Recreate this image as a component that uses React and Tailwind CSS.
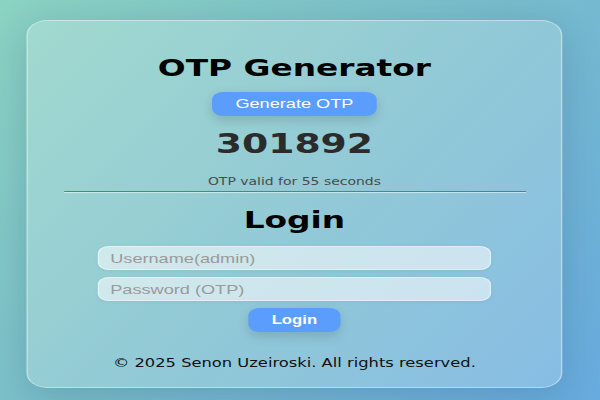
export default function App() {
  return (
    <div className="w-[600px] h-[400px] overflow-hidden bg-[linear-gradient(135deg,#8bd3c2_0%,#78bdcc_50%,#68abdf_100%)]">
      <div className="w-[430px] h-[400px] origin-top-left scale-x-[1.3953] pt-[20px]">
        <div className="ml-[19px] w-[384px] rounded-[15px] border border-white/40 bg-white/20 shadow-[0_8px_32px_rgba(20,40,80,0.18)] pt-[33px] pb-[17px] flex flex-col items-center font-['DejaVu_Sans',sans-serif]">
          <h1 className="text-[23.5px] leading-[28px] font-bold text-black">OTP Generator</h1>
          <button className="mt-[10px] h-[24px] px-[17px] rounded-[8px] bg-[#5b9dfc] text-white text-[13px] font-['Liberation_Sans',Arial,sans-serif] shadow-[0_4px_10px_rgba(0,0,0,0.15)]">
            Generate OTP
          </button>
          <div className="mt-[13px] text-[27px] leading-[30px] font-bold text-[#2b2b2b]">301892</div>
          <p className="mt-[17px] text-[10px] leading-[12px] text-[#4a4a4a]">OTP valid for 55 seconds</p>
          <div className="mt-[3px] w-[331px] border-t border-[#7d7171] border-b border-b-white/50"></div>
          <h2 className="mt-[13px] text-[23.5px] leading-[28px] font-bold text-black">Login</h2>
          <div className="mt-[12px] w-[282px] flex flex-col gap-[7px] font-['Liberation_Sans',Arial,sans-serif]">
            <input
              type="text"
              placeholder="Username(admin)"
              className="h-[24px] w-full rounded-[8px] bg-white/55 border border-white/40 px-[8px] text-[13px] text-[#333] placeholder:text-[#9a9a9a] outline-none shadow-[0_1px_4px_rgba(0,0,0,0.05)]"
            />
            <input
              type="password"
              placeholder="Password (OTP)"
              className="h-[24px] w-full rounded-[8px] bg-white/55 border border-white/40 px-[8px] text-[13px] text-[#333] placeholder:text-[#9a9a9a] outline-none shadow-[0_1px_4px_rgba(0,0,0,0.05)]"
            />
          </div>
          <button className="mt-[7px] h-[24px] w-[66px] rounded-[8px] bg-[#5b9dfc] text-white text-[12px] font-bold font-['Liberation_Sans',Arial,sans-serif] shadow-[0_4px_10px_rgba(0,0,0,0.15)]">
            Login
          </button>
          <p className="mt-[24px] text-[11.7px] leading-[14px] text-[#111]">© 2025 Senon Uzeiroski. All rights reserved.</p>
        </div>
      </div>
    </div>
  );
}
